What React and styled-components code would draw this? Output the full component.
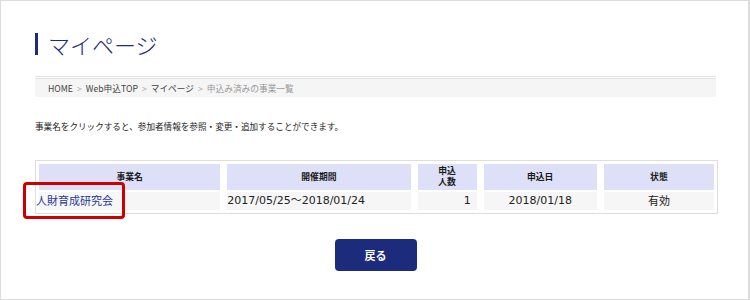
import React from 'react'
import styled, { createGlobalStyle } from 'styled-components'

const Global = createGlobalStyle`
  html, body {
    margin: 0;
    padding: 0;
    background: #fff;
  }
  body {
    font-family: "DejaVu Sans", "Noto Sans CJK JP", sans-serif;
    color: #333;
  }
`

const Frame = styled.div`
  width: 750px;
  height: 300px;
  box-sizing: border-box;
  border: 1px solid #dcdcdc;
  border-right-width: 2px;
  padding: 32px 32px 0 34px;
`

const Title = styled.h1`
  margin: 0;
  height: 22px;
  display: flex;
  align-items: center;
  gap: 10px;
  font-family: "Noto Sans CJK JP", sans-serif;
  font-weight: 300;
  font-size: 22px;
  color: #1d2b7d;
  &::before {
    content: "";
    width: 3px;
    height: 22px;
    background: #1d2b7d;
  }
`

const Breadcrumb = styled.div`
  margin-top: 21px;
  height: 18px;
  border-top: 3px double #e2e2e2;
  background: #f5f5f5;
  background-clip: padding-box;
  display: flex;
  align-items: center;
  padding-left: 13px;
  font-family: "Noto Sans CJK JP", sans-serif;
  font-size: 8.7px;
  color: #444;
`

const Sep = styled.span`
  color: #aaa;
  margin: 0 4px;
`

const Current = styled.span`
  color: #999;
`

const Note = styled.p`
  margin: 23px 0 0;
  font-family: "Noto Sans CJK JP", sans-serif;
  font-size: 8.6px;
  color: #222;
`

const TableWrap = styled.div`
  position: relative;
  margin-top: 28px;
  width: 683px;
  box-sizing: border-box;
  border: 1px solid #dedede;
  padding: 1px 0 1px;
`

const Table = styled.table`
  width: calc(100% + 8px);
  margin: 0 -4px;
  border-collapse: separate;
  border-spacing: 7px 2px;
`

const Th = styled.th`
  background: #dde0f6;
  height: 26px;
  padding: 0;
  font-family: "Noto Sans CJK JP", sans-serif;
  font-size: 8.8px;
  font-weight: 700;
  color: #1a1a1a;
  line-height: 1.2;
  width: ${p => p.w}px;
`

const Td = styled.td`
  background: #f6f6f6;
  height: 16px;
  padding: 0 ${p => (p.align === 'right' ? '6px' : '0')} 0 0;
  font-size: 11px;
  color: #222;
  text-align: ${p => p.align || 'center'};
  white-space: nowrap;
  line-height: 16px;
`

const CjkText = styled.span`
  font-family: "Noto Sans CJK JP", sans-serif;
`

const NameLink = styled.a`
  font-family: "Noto Sans CJK JP", sans-serif;
  font-size: 11px;
  color: #2a3aa0;
  text-decoration: none;
  margin-left: -3px;
`

const Highlight = styled.div`
  position: absolute;
  left: -13px;
  top: 21px;
  width: 96px;
  height: 31px;
  border: 3px solid #cc0000;
  border-radius: 4px;
`

const Actions = styled.div`
  display: flex;
  justify-content: center;
  margin-top: 25px;
  width: 683px;
`

const BackButton = styled.button`
  width: 82px;
  height: 32px;
  border: none;
  border-radius: 4px;
  background: #1d2b7d;
  color: #fff;
  font-family: "Noto Sans CJK JP", sans-serif;
  font-size: 11px;
  font-weight: 700;
  cursor: pointer;
  margin-left: -2px;
`

export default function App() {
  return (
    <>
      <Global />
      <Frame>
        <Title>マイページ</Title>
        <Breadcrumb>
          <span>HOME</span><Sep>&gt;</Sep>
          <span>Web申込TOP</span><Sep>&gt;</Sep>
          <span>マイページ</span><Sep>&gt;</Sep>
          <Current>申込み済みの事業一覧</Current>
        </Breadcrumb>
        <Note>事業名をクリックすると、参加者情報を参照・変更・追加することができます。</Note>
        <TableWrap>
          <Table>
            <thead>
              <tr>
                <Th w={181}>事業名</Th>
                <Th w={183}>開催期間</Th>
                <Th w={59}>申込<br />人数</Th>
                <Th w={113}>申込日</Th>
                <Th w={110}>状態</Th>
              </tr>
            </thead>
            <tbody>
              <tr>
                <Td align="left"><NameLink href="#">人財育成研究会</NameLink></Td>
                <Td align="left">2017/05/25～2018/01/24</Td>
                <Td align="right">1</Td>
                <Td>2018/01/18</Td>
                <Td><CjkText>有効</CjkText></Td>
              </tr>
            </tbody>
          </Table>
          <Highlight />
        </TableWrap>
        <Actions>
          <BackButton>戻る</BackButton>
        </Actions>
      </Frame>
    </>
  )
}
